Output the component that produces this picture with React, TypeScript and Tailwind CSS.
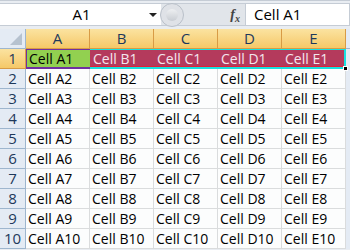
import React from 'react'

const cols = ['A', 'B', 'C', 'D', 'E']
const rows = [1, 2, 3, 4, 5, 6, 7, 8, 9, 10]

function TopBar() {
  return (
    <div className="flex h-[29px] bg-[#e9edf2] border-t border-[#c5ccd5] pt-[2px] pb-[3px]">
      <div className="w-[161px] bg-white border-y border-[#c5ccd5] flex items-center relative">
        <span className="flex-1 text-center text-[15px] text-black pl-[14px]">A1</span>
        <span className="mr-[4px] w-0 h-0 border-x-[4px] border-x-transparent border-t-[4px] border-t-[#222]" />
      </div>
      <div className="w-[84px] flex items-center relative bg-[#e1e5ea] border-y border-[#c5ccd5]">
        <div className="absolute -left-[1px] top-[-1px] w-[24px] h-[24px] rounded-full border border-[#b9c0c9] bg-[#dfe2e7] flex items-center justify-center">
          <div className="w-[12px] h-[12px] rounded-full bg-gradient-to-b from-[#eef0f2] to-[#c9cdd3]" />
        </div>
        <span className="ml-auto mr-[5px] text-[14px] italic font-bold text-[#444]" style={{ fontFamily: '"Liberation Serif", serif' }}>
          f<sub className="text-[10px]">x</sub>
        </span>
      </div>
      <div className="flex-1 bg-white border border-[#c5ccd5] flex items-center pl-[8px] text-[15px] text-black">
        Cell A1
      </div>
    </div>
  )
}

function Cell({ r, c }: { r: number; c: string }) {
  const label = `Cell ${c}${r}`
  if (r === 1 && c === 'A') {
    return (
      <div className="h-[20px] bg-[#92d050] border-l border-t border-b-2 border-[#7030a0] flex items-center pl-[2px] text-black">
        {label}
      </div>
    )
  }
  if (r === 1) {
    return (
      <div className={`h-[20px] bg-[#b43a5c] border-t border-t-[#19e0e0] border-b-2 border-b-[#19e0e0] flex items-center pl-[3px] text-[#f3e6ee] relative ${c === 'E' ? 'border-r-2 border-r-[#19e0e0]' : ''}`}>
        {label}
        <span className="absolute left-0 right-0 bottom-0 h-px bg-[#e0203a]" />
        {c === 'E' && <span className="absolute -right-[4px] -bottom-[4px] w-[5px] h-[5px] bg-black border border-white" />}
      </div>
    )
  }
  return (
    <div className="h-[20px] bg-[#fcfdfd] border-r border-b border-[#dadcdd] flex items-center pl-[2px] text-black">
      {label}
    </div>
  )
}

export default function App() {
  return (
    <div className="w-[350px] h-[250px] overflow-hidden bg-[#e9edf2]" style={{ fontFamily: '"Open Sans", "Noto Sans", sans-serif' }}>
      <TopBar />
      <div className="grid grid-cols-[26px_64px_64px_64px_64px_64px_1fr] text-[14px] leading-none">
        <div className="h-[20px] bg-[#e4ebf4] border-r border-b border-[#9eb6ce] relative overflow-hidden">
          <span className="absolute right-[3px] bottom-[3px] w-0 h-0 border-l-[12px] border-l-transparent border-b-[12px] border-b-[#b6c2cf]" />
        </div>
        {cols.map((c) => (
          <div key={c} className="h-[20px] bg-gradient-to-b from-[#fbe3a0] to-[#f5c867] border-r border-b border-[#d89b45] flex items-center justify-center text-[15px] text-[#1e395b]">
            {c}
          </div>
        ))}
        <div className="h-[20px] bg-[#e4ebf4] border-b border-[#9eb6ce]" />
        {rows.map((r) => (
          <React.Fragment key={r}>
            <div className={`h-[20px] border-r border-b flex items-center justify-center text-[15px] text-[#1e395b] ${r === 1 ? 'bg-gradient-to-b from-[#fbe3a0] to-[#f5c867] border-[#d89b45]' : 'bg-[#e4ebf4] border-[#9eb6ce]'}`}>
              {r}
            </div>
            {cols.map((c) => (
              <Cell key={c} r={r} c={c} />
            ))}
            <div className="h-[20px] bg-[#e4ebf4]" />
          </React.Fragment>
        ))}
      </div>
    </div>
  )
}
